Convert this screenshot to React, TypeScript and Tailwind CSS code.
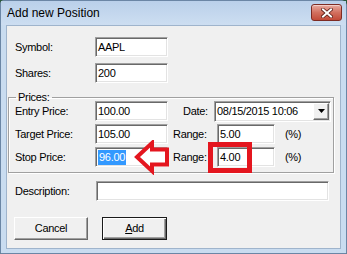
import React from "react";

const sunken =
  "bg-white border border-t-[#a0a0a0] border-l-[#a0a0a0] border-b-white border-r-white shadow-[inset_1px_1px_0_#696969,inset_-1px_-1px_0_#e3e3e3] flex items-center pl-[2px] text-[11px] tracking-[-0.3px] leading-none text-black";

const Label = ({ children, className }: { children: React.ReactNode; className: string }) => (
  <div className={`text-[11px] tracking-[-0.3px] leading-none text-black ${className}`}>{children}</div>
);

const CloseButton = () => (
  <div className="mt-[3px] w-[31px] h-[17px] rounded-[3px] border border-[#7d2b23] bg-gradient-to-b from-[#e8aaa0] via-[#d2705f] to-[#c24a38] shadow-[inset_0_1px_0_#f4cfc8] flex items-center justify-center">
    <svg width="12" height="10" viewBox="0 0 12 10">
      <path d="M2 1.5 L10 8.5 M10 1.5 L2 8.5" stroke="#5a1d16" strokeWidth="3.6" strokeLinecap="square" />
      <path d="M2 1.5 L10 8.5 M10 1.5 L2 8.5" stroke="#ffffff" strokeWidth="2" strokeLinecap="square" />
    </svg>
  </div>
);

const RedArrow = () => (
  <svg
    className="absolute left-[127px] top-[114px]"
    width="36"
    height="35"
    viewBox="0 0 36 35"
  >
    <polygon
      points="3,17 18,3 18,9.5 33,9.5 33,24.5 18,24.5 18,31"
      fill="#ffffff"
      stroke="#e4161f"
      strokeWidth="4"
      strokeLinejoin="miter"
    />
  </svg>
);

export default function App() {
  return (
    <div className="w-[347px] h-[254px] bg-[#2c5a3c] font-['Liberation_Sans',Arial,sans-serif]">
      <div className="w-full h-full flex flex-col bg-[#c9dcf0] border border-[#6b86a5] rounded-tr-[6px] rounded-tl-[4px]">
        <div className="h-[24px] flex items-start pl-[6px] pr-[4px] bg-gradient-to-b from-[#bad0ea] to-[#cddef1]">
          <div className="mt-[6px] text-[12px] leading-none text-black">Add new Position</div>
          <div className="ml-auto">
            <CloseButton />
          </div>
        </div>

        <div className="relative flex-1 ml-[5px] mr-[5px] mb-[4px] bg-[#f0f0f0] border border-[#9fb4cc] pl-[8px] pt-[11px]">
          <div className="flex items-center h-[20px]">
            <Label className="w-[80px]">Symbol:</Label>
            <div className={`${sunken} w-[73px] h-[20px]`}>AAPL</div>
          </div>
          <div className="flex items-center h-[20px] mt-[6px]">
            <Label className="w-[80px]">Shares:</Label>
            <div className={`${sunken} w-[73px] h-[20px]`}>200</div>
          </div>

          <fieldset className="-ml-[7px] mt-[9px] w-[326px] border border-[#a0a0a0] shadow-[1px_1px_0_#ffffff,inset_1px_1px_0_#ffffff] pb-[5px]">
            <legend className="ml-[7px] px-[2px] text-[11px] tracking-[-0.3px] leading-[10px] h-[10px] text-black">Prices:</legend>
            <div className="pl-[6px] -mt-[1px] flex flex-col gap-[3px]">
              <div className="flex items-center h-[20px]">
                <Label className="w-[80px]">Entry Price:</Label>
                <div className={`${sunken} w-[73px] h-[20px]`}>100.00</div>
                <Label className="w-[46px] pl-[15px]">Date:</Label>
                <div className={`${sunken} w-[117px] h-[21px] pr-[1px]`}>
                  <span>08/15/2015 10:06</span>
                  <div className="ml-auto w-[16px] h-[17px] bg-[#f0f0f0] border border-t-white border-l-white border-b-[#696969] border-r-[#696969] shadow-[inset_-1px_-1px_0_#a0a0a0] flex items-center justify-center">
                    <svg width="7" height="4" viewBox="0 0 7 4">
                      <polygon points="0,0 7,0 3.5,4" fill="#000000" />
                    </svg>
                  </div>
                </div>
              </div>
              <div className="flex items-center h-[20px]">
                <Label className="w-[80px]">Target Price:</Label>
                <div className={`${sunken} w-[73px] h-[20px]`}>105.00</div>
                <Label className="w-[49px] pl-[5px]">Range:</Label>
                <div className={`${sunken} w-[58px] h-[20px]`}>5.00</div>
                <Label className="ml-[10px]">(%)</Label>
              </div>
              <div className="flex items-center h-[20px]">
                <Label className="w-[80px]">Stop Price:</Label>
                <div className={`${sunken} w-[73px] h-[20px]`}>
                  <span className="bg-[#3399ff] text-white h-[15px] flex items-center px-[1px]">96.00</span>
                </div>
                <Label className="w-[49px] pl-[5px]">Range:</Label>
                <div className={`${sunken} w-[58px] h-[20px]`}>4.00</div>
                <Label className="ml-[10px]">(%)</Label>
              </div>
            </div>
          </fieldset>

          <div className="flex items-center h-[20px] mt-[8px]">
            <Label className="w-[81px]">Description:</Label>
            <div className={`${sunken} w-[233px] h-[20px]`}></div>
          </div>

          <div className="flex items-center mt-[16px] -ml-[1px]">
            <button className="w-[74px] h-[23px] bg-[#f0f0f0] border border-t-white border-l-white border-b-[#696969] border-r-[#696969] shadow-[inset_-1px_-1px_0_#a0a0a0] text-[11px] tracking-[-0.3px] leading-none text-black">
              Cancel
            </button>
            <button className="ml-[14px] w-[65px] h-[23px] bg-[#f0f0f0] border border-[#1a1a1a] shadow-[inset_1px_1px_0_#ffffff,inset_-1px_-1px_0_#696969,inset_-2px_-2px_0_#a0a0a0] text-[11px] tracking-[-0.3px] leading-none text-black">
              <span className="underline underline-offset-1">A</span>dd
            </button>
          </div>

          <RedArrow />
          <div className="absolute left-[201px] top-[116px] w-[44px] h-[31px] border-[5px] border-[#e4161f]"></div>
        </div>
      </div>
    </div>
  );
}
